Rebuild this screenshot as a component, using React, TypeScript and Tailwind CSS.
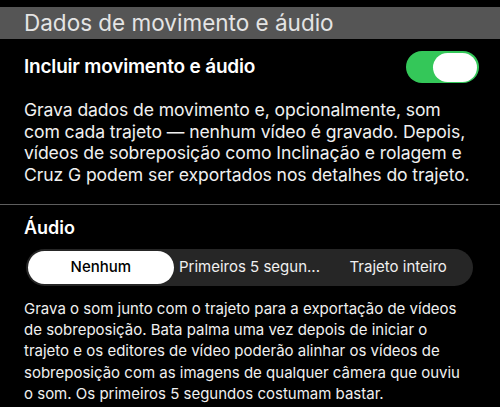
export default function App() {
  return (
    <div className="w-[500px] h-[407px] overflow-hidden bg-black text-white font-['Inter','Liberation_Sans',sans-serif]">
      <div className="pt-[7px]">
        <div className="h-[32px] bg-[#555555] pl-6 flex items-center text-[22.5px] text-[#e4e4e4] leading-none">
          Dados de movimento e áudio
        </div>
      </div>

      <div className="pl-6 pr-[21px] pt-[12px] h-[44px] flex items-center justify-between">
        <span className="text-[19px] font-semibold tracking-[-0.2px]">Incluir movimento e áudio</span>
        <div className="w-[73px] h-[32px] rounded-full bg-[#34c759] flex items-center justify-end pr-[2px]">
          <div className="w-[44px] h-[29px] rounded-full bg-white" />
        </div>
      </div>

      <p className="px-6 mt-[16px] text-[17.6px] leading-[21.7px] text-[#f0f0f0] tracking-[-0.1px]">
        Grava dados de movimento e, opcionalmente, som com cada trajeto — nenhum vídeo é gravado. Depois,
        vídeos de sobreposição como Inclinação e rolagem e Cruz G podem ser exportados nos detalhes do trajeto.
      </p>

      <div className="mt-[18px] h-px bg-[#5e5e5e]" />

      <div className="pl-6 pr-[27px]">
        <div className="mt-[12px] text-[18px] font-semibold leading-[22px]">Áudio</div>
        <div className="mt-[10px] ml-[2px] h-[37px] rounded-full bg-[#262626] p-[2px] grid grid-cols-3 gap-[3px] text-[15px]">
          <div className="rounded-full bg-white text-black font-medium flex items-center justify-center">Nenhum</div>
          <div className="flex items-center justify-center text-[#f0f0f0]">Primeiros 5 segun...</div>
          <div className="flex items-center justify-center text-[#f0f0f0]">Trajeto inteiro</div>
        </div>
        <p className="mt-[12px] text-[15px] leading-[21.3px] text-[#f0f0f0]">
          Grava o som junto com o trajeto para a exportação de vídeos de sobreposição. Bata palma uma vez depois de
          iniciar o trajeto e os editores de vídeo poderão alinhar os vídeos de sobreposição com as imagens de
          qualquer câmera que ouviu o som. Os primeiros 5 segundos costumam bastar.
        </p>
      </div>
      <div className="mt-[3px] h-px bg-[#5e5e5e]" />
    </div>
  );
}
